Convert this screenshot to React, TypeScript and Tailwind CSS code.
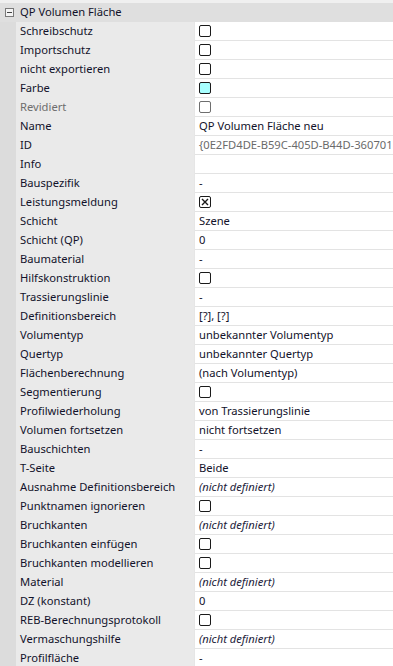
import React from 'react';

type Kind = 'text' | 'check' | 'checked' | 'color' | 'undef' | 'id';

interface Row {
  label: string;
  kind: Kind;
  value?: string;
  disabled?: boolean;
}

const ROWS: Row[] = [
  { label: 'Schreibschutz', kind: 'check' },
  { label: 'Importschutz', kind: 'check' },
  { label: 'nicht exportieren', kind: 'check' },
  { label: 'Farbe', kind: 'color' },
  { label: 'Revidiert', kind: 'check', disabled: true },
  { label: 'Name', kind: 'text', value: 'QP Volumen Fläche neu' },
  { label: 'ID', kind: 'id', value: '{0E2FD4DE-B59C-405D-B44D-360701DA1C2E}' },
  { label: 'Info', kind: 'text', value: '' },
  { label: 'Bauspezifik', kind: 'text', value: '-' },
  { label: 'Leistungsmeldung', kind: 'checked' },
  { label: 'Schicht', kind: 'text', value: 'Szene' },
  { label: 'Schicht (QP)', kind: 'text', value: '0' },
  { label: 'Baumaterial', kind: 'text', value: '-' },
  { label: 'Hilfskonstruktion', kind: 'check' },
  { label: 'Trassierungslinie', kind: 'text', value: '-' },
  { label: 'Definitionsbereich', kind: 'text', value: '[?], [?]' },
  { label: 'Volumentyp', kind: 'text', value: 'unbekannter Volumentyp' },
  { label: 'Quertyp', kind: 'text', value: 'unbekannter Quertyp' },
  { label: 'Flächenberechnung', kind: 'text', value: '(nach Volumentyp)' },
  { label: 'Segmentierung', kind: 'check' },
  { label: 'Profilwiederholung', kind: 'text', value: 'von Trassierungslinie' },
  { label: 'Volumen fortsetzen', kind: 'text', value: 'nicht fortsetzen' },
  { label: 'Bauschichten', kind: 'text', value: '-' },
  { label: 'T-Seite', kind: 'text', value: 'Beide' },
  { label: 'Ausnahme Definitionsbereich', kind: 'undef' },
  { label: 'Punktnamen ignorieren', kind: 'check' },
  { label: 'Bruchkanten', kind: 'undef' },
  { label: 'Bruchkanten einfügen', kind: 'check' },
  { label: 'Bruchkanten modellieren', kind: 'check' },
  { label: 'Material', kind: 'undef' },
  { label: 'DZ (konstant)', kind: 'text', value: '0' },
  { label: 'REB-Berechnungsprotokoll', kind: 'check' },
  { label: 'Vermaschungshilfe', kind: 'undef' },
  { label: 'Profilfläche', kind: 'text', value: '-' },
];

function Box({ fill = 'bg-white', border = 'border-[#1a1a1a]', children }: { fill?: string; border?: string; children?: React.ReactNode }) {
  return (
    <div className={`w-[12px] h-[12px] border rounded-[2px] flex items-center justify-center ${fill} ${border}`}>
      {children}
    </div>
  );
}

function Value({ row }: { row: Row }) {
  switch (row.kind) {
    case 'check':
      return <Box border={row.disabled ? 'border-[#6e6e6e]' : 'border-[#1a1a1a]'} />;
    case 'color':
      return <Box fill="bg-[#a8ffff]" />;
    case 'checked':
      return (
        <Box>
          <svg width="8" height="8" viewBox="0 0 8 8">
            <path d="M1 1L7 7M7 1L1 7" stroke="#1a1a1a" strokeWidth="1.4" />
          </svg>
        </Box>
      );
    case 'undef':
      return <span className="italic text-[#1c1c3a]">(nicht definiert)</span>;
    case 'id':
      return <span className="text-[#6a6a6a] whitespace-nowrap">{row.value}</span>;
    default:
      return <span className="whitespace-nowrap">{row.value}</span>;
  }
}

export default function App() {
  return (
    <div
      className="w-[393px] h-[666px] overflow-hidden bg-[#f0f0f0] pt-[3px] text-[11.2px] leading-[16px] text-[#12122a]"
      style={{ fontFamily: '"Noto Sans", "Open Sans", sans-serif' }}
    >
      {/* Category header */}
      <div className="h-[19px] bg-[#dfdfdf] flex items-center">
        <div className="w-[16px] flex justify-center pl-[3px]">
          <div className="w-[9px] h-[9px] border border-[#7a7a7a] bg-[#f4f4f4] flex items-center justify-center">
            <div className="w-[5px] h-[1px] bg-[#444]" />
          </div>
        </div>
        <span className="pl-[4px] pb-[1px]">QP Volumen Fläche</span>
      </div>

      {ROWS.map((row) => (
        <div key={row.label} className="flex h-[19px]">
          <div className="w-[16px] bg-[#dcdcdc]" />
          <div
            className={`w-[178px] bg-[#eaeaea] pl-[4px] pb-[1px] flex items-center whitespace-nowrap overflow-hidden ${
              row.disabled ? 'text-[#6d6d6d]' : ''
            }`}
          >
            {row.label}
          </div>
          <div className="w-[1px] bg-[#e6e6e6]" />
          <div className="flex-1 bg-white border-b border-[#e3e3e3] pl-[4px] flex items-center overflow-hidden">
            <Value row={row} />
          </div>
        </div>
      ))}
    </div>
  );
}
